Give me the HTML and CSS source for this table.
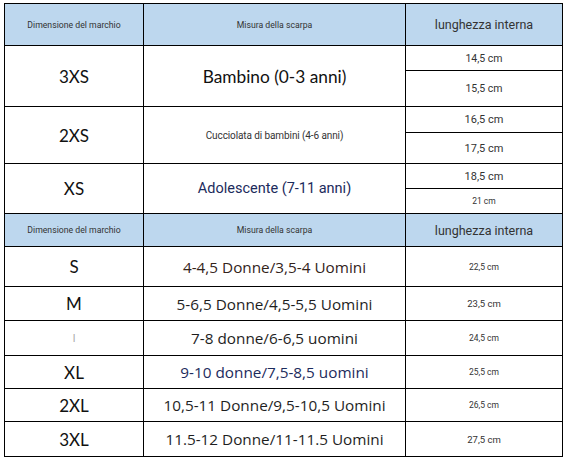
FILE: index.html
```html
<!DOCTYPE html>
<html lang="it">
<head>
    <meta charset="UTF-8">
    <meta name="viewport" content="width=device-width, initial-scale=1.0">
    <title>Tabella taglie</title>
    <link rel="stylesheet" href="styles.css">
</head>
<body>
    <table class="size-table">
        <colgroup>
            <col class="col-brand">
            <col class="col-shoe">
            <col class="col-length">
        </colgroup>
        <tr class="head head-top">
            <th class="small">Dimensione del marchio</th>
            <th class="small">Misura della scarpa</th>
            <th class="head-len">lunghezza interna</th>
        </tr>
        <tr class="r-25">
            <td rowspan="2" class="size">3XS</td>
            <td rowspan="2" class="shoe big">Bambino (0-3 anni)</td>
            <td class="len">14,5 cm</td>
        </tr>
        <tr class="r-36">
            <td class="len">15,5 cm</td>
        </tr>
        <tr class="r-26">
            <td rowspan="2" class="size">2XS</td>
            <td rowspan="2" class="shoe tiny">Cucciolata di bambini (4-6 anni)</td>
            <td class="len len-lg">16,5 cm</td>
        </tr>
        <tr class="r-31">
            <td class="len len-lg">17,5 cm</td>
        </tr>
        <tr class="r-25">
            <td rowspan="2" class="size">XS</td>
            <td rowspan="2" class="shoe teen">Adolescente (7-11 anni)</td>
            <td class="len len-lg">18,5 cm</td>
        </tr>
        <tr class="r-25">
            <td class="len len-sm">21 cm</td>
        </tr>
        <tr class="head head-mid">
            <th class="small">Dimensione del marchio</th>
            <th class="small">Misura della scarpa</th>
            <th class="head-len">lunghezza interna</th>
        </tr>
        <tr class="r-40">
            <td class="size">S</td>
            <td class="shoe brown">4-4,5 Donne/3,5-4 Uomini</td>
            <td class="len len-sm">22,5 cm</td>
        </tr>
        <tr class="r-34">
            <td class="size">M</td>
            <td class="shoe dark">5-6,5 Donne/4,5-5,5 Uomini</td>
            <td class="len len-md">23,5 cm</td>
        </tr>
        <tr class="r-35">
            <td class="size faint">l</td>
            <td class="shoe dark">7-8 donne/6-6,5 uomini</td>
            <td class="len len-sm">24,5 cm</td>
        </tr>
        <tr class="r-33">
            <td class="size">XL</td>
            <td class="shoe navy">9-10 donne/7,5-8,5 uomini</td>
            <td class="len len-sm">25,5 cm</td>
        </tr>
        <tr class="r-33">
            <td class="size">2XL</td>
            <td class="shoe dark">10,5-11 Donne/9,5-10,5 Uomini</td>
            <td class="len len-sm">26,5 cm</td>
        </tr>
        <tr class="r-35">
            <td class="size">3XL</td>
            <td class="shoe dark">11.5-12 Donne/11-11.5 Uomini</td>
            <td class="len len-md">27,5 cm</td>
        </tr>
    </table>
</body>
</html>
```

FILE: styles.css
```css
body {
    margin: 0;
    padding: 0;
    background-color: #fff;
    font-family: Roboto, "Liberation Sans", sans-serif;
    color: #222;
}
.size-table {
    margin: 3px 0 0 4px;
    border-collapse: collapse;
    table-layout: fixed;
    width: 558px;
}
.col-brand {
    width: 139px;
}
.col-shoe {
    width: 262px;
}
.col-length {
    width: 157px;
}
.size-table th,
.size-table td {
    border: 1px solid #000;
    padding: 0;
    text-align: center;
    vertical-align: middle;
    overflow: hidden;
    white-space: nowrap;
}
.head th {
    background-color: #bdd7ee;
    font-weight: normal;
    color: #333;
}
.head-top {
    height: 42px;
}
.head-mid {
    height: 33px;
}
.head .small {
    font-size: 8.7px;
}
.head-len {
    font-size: 12.5px;
    color: #222;
}
.r-25 { height: 25px; }
.r-26 { height: 26px; }
.r-31 { height: 31px; }
.r-33 { height: 33px; }
.r-34 { height: 34px; }
.r-35 { height: 35px; }
.r-36 { height: 36px; }
.r-40 { height: 40px; }
.size {
    font-family: Lato, "Open Sans", sans-serif;
    font-size: 17px;
    color: #111;
}
.size.faint {
    font-family: Roboto, sans-serif;
    font-size: 11px;
    color: #aaa;
}
.shoe {
    font-family: "Open Sans", "Noto Sans", sans-serif;
    font-size: 15.3px;
    color: #222;
}
.shoe.big {
    font-family: Lato, "Open Sans", sans-serif;
    font-size: 17.3px;
    color: #111;
}
.shoe.tiny {
    font-family: Roboto, sans-serif;
    font-size: 10px;
    letter-spacing: -0.1px;
    color: #333;
}
.shoe.teen {
    font-family: Roboto, sans-serif;
    font-size: 14.5px;
    color: #1c2b5c;
}
.shoe.navy {
    color: #1c2b5c;
}
.shoe.brown {
    color: #33231a;
}
.shoe.dark {
    color: #1e1e1e;
}
.len {
    font-size: 10.5px;
    color: #333;
}
.len-lg {
    font-size: 11px;
}
.len-md {
    font-size: 9.5px;
}
.len-sm {
    font-size: 8.5px;
}
```
